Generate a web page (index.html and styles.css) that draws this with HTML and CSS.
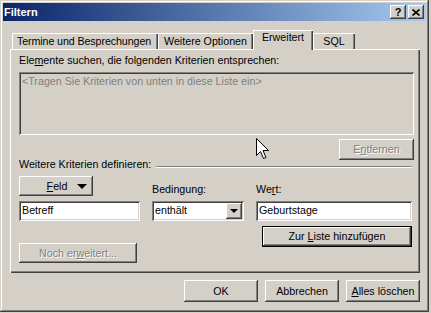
FILE: index.html
```html
<!DOCTYPE html>
<html lang="de">
<head>
    <meta charset="UTF-8">
    <title>Filtern</title>
    <link rel="stylesheet" href="styles.css">
</head>
<body>
<div class="window">
    <div class="titlebar">
        <span class="title">Filtern</span>
        <div class="caption-buttons">
            <span class="cap-btn help">?</span>
            <span class="cap-btn">
                <svg width="8" height="7" viewBox="0 0 8 7"><path d="M0.5 0.5L7.5 6.5M7.5 0.5L0.5 6.5" stroke="#000" stroke-width="1.7"/></svg>
            </span>
        </div>
    </div>

    <div class="client">
        <!-- Tab strip -->
        <div class="tabs">
            <div class="tab tab-termine">Termine und Besprechungen</div>
            <div class="tab tab-weitere">Weitere Optionen</div>
            <div class="tab tab-erweitert active">Erweitert</div>
            <div class="tab tab-sql">SQL</div>
        </div>

        <div class="panel">
            <div class="label">Ele<u>m</u>ente suchen, die folgenden Kriterien entsprechen:</div>
            <div class="listbox">&lt;Tragen Sie Kriterien von unten in diese Liste ein&gt;</div>
            <div class="remove-row">
                <button class="btn disabled btn-remove"><span>E<u>n</u>tfernen</span></button>
            </div>

            <div class="group-title">
                <span>Weitere Kriterien definieren:</span>
                <span class="rule"></span>
            </div>

            <div class="criteria">
                <div class="col col-field">
                    <button class="btn btn-feld"><span class="feld-text"><u>F</u>eld</span><span class="tri"></span></button>
                    <div class="field">Betreff</div>
                </div>
                <div class="col col-cond">
                    <label class="small-label">Bedingung:</label>
                    <div class="field combo">
                        <span>enthält</span>
                        <span class="drop"><span class="tri small"></span></span>
                    </div>
                </div>
                <div class="col col-value">
                    <label class="small-label">We<u>r</u>t:</label>
                    <div class="field">Geburtstage</div>
                </div>
            </div>

            <div class="actions">
                <button class="btn disabled btn-more"><span>Noch er<u>w</u>eitert...</span></button>
                <button class="btn default btn-add"><span>Zur <u>L</u>iste hinzufügen</span></button>
            </div>
        </div>

        <div class="footer">
            <button class="btn btn-footer"><span>OK</span></button>
            <button class="btn btn-footer"><span>Abbrechen</span></button>
            <button class="btn btn-footer"><span><u>A</u>lles löschen</span></button>
        </div>
    </div>

    <!-- mouse pointer over the dialog -->
    <svg class="cursor" width="13" height="21" viewBox="0 0 13 21">
        <path d="M0.5 0.5V17.5L4.5 13.5L7.5 20.5L10 19.5L7 12.5H12.5Z" fill="#fff" stroke="#000" stroke-width="1"/>
    </svg>
</div>
</body>
</html>
```

FILE: styles.css
```css
/* Classic Windows dialog look */
* {
    box-sizing: border-box;
}

body {
    margin: 0;
    background: #d4d0c8;
    font-family: "Liberation Sans", Arial, sans-serif;
    font-size: 10.7px;
    line-height: 13px;
    color: #000;
}

u {
    text-decoration: underline;
    text-underline-offset: 1px;
}

.window {
    position: relative;
    width: 429px;
    height: 312px;
    padding: 3px;
    background: #d4d0c8;
    box-shadow: inset -1px -1px #404040, inset 1px 1px #d4d0c8, inset -2px -2px #808080, inset 2px 2px #fff;
}

.titlebar {
    height: 18px;
    display: flex;
    align-items: center;
    justify-content: space-between;
    padding: 0 2px 0 1px;
    background: linear-gradient(to right, #0a246a, #a6caf0);
    color: #fff;
    font-weight: bold;
    font-size: 11px;
}

.caption-buttons {
    display: flex;
    gap: 2px;
}

.cap-btn {
    width: 16px;
    height: 14px;
    display: flex;
    align-items: center;
    justify-content: center;
    background: #d4d0c8;
    color: #000;
    box-shadow: inset -1px -1px #404040, inset 1px 1px #fff, inset -2px -2px #808080;
}

.cap-btn.help {
    font-size: 11px;
    font-weight: bold;
    padding-top: 1px;
}

.client {
    padding: 9px 6px 0 7px;
}

/* Tabs */
.tabs {
    display: flex;
    align-items: flex-end;
    height: 19px;
    padding-left: 2px;
}

.tab {
    height: 16px;
    padding-top: 2px;
    text-align: center;
    white-space: nowrap;
    box-shadow: inset 1px 1px #fff, inset -1px 0 #404040, inset -2px 0 #808080;
}

.tab-termine { width: 146px; padding-right: 2px; letter-spacing: -0.1px; }
.tab-weitere { width: 95px; }
.tab-erweitert { width: 60px; }
.tab-sql { width: 42px; }

.tab.active {
    position: relative;
    z-index: 1;
    height: 20px;
    margin-bottom: -1px;
    padding-top: 1px;
    background: #d4d0c8;
}

.panel {
    height: 224px;
    padding: 5px 6px 0 9px;
    box-shadow: inset 1px 1px #fff, inset -1px -1px #404040, inset -2px -2px #808080;
}

.listbox {
    width: 395px;
    height: 63px;
    margin-top: 5px;
    padding: 3px 3px;
    color: #808080;
    box-shadow: inset 1px 1px #808080, inset -1px -1px #fff, inset 2px 2px #404040, inset -2px -2px #d4d0c8;
}

.remove-row {
    display: flex;
    justify-content: flex-end;
    margin-top: 4px;
}

/* Buttons */
.btn {
    display: flex;
    align-items: center;
    justify-content: center;
    padding: 0;
    border: 0;
    background: #d4d0c8;
    font: inherit;
    color: #000;
    white-space: nowrap;
    box-shadow: inset -1px -1px #404040, inset 1px 1px #fff, inset -2px -2px #808080, inset 2px 2px #d4d0c8;
}

.btn.disabled {
    color: #808080;
    text-shadow: 1px 1px #fff;
}

.btn.default {
    border: 1px solid #000;
}

.btn-remove {
    width: 75px;
    height: 21px;
}

.group-title {
    display: flex;
    align-items: flex-start;
    margin-top: -2px;
    height: 13px;
}

.rule {
    flex: 1;
    margin: 8px 2px 0 5px;
    border-top: 1px solid #808080;
    border-bottom: 1px solid #fff;
}

/* Criteria row */
.criteria {
    display: flex;
    align-items: flex-end;
    margin-top: 5px;
}

.col {
    display: flex;
    flex-direction: column;
    align-items: flex-start;
}

.col-field { width: 121px; }
.col-cond { width: 92px; margin-left: 12px; }
.col-value { width: 156px; margin-left: 12px; }

.btn-feld {
    width: 74px;
    height: 20px;
    margin-bottom: 5px;
    justify-content: flex-start;
    padding-left: 18px;
}

.feld-text {
    width: 40px;
}

.tri {
    width: 0;
    height: 0;
    border-left: 5px solid transparent;
    border-right: 5px solid transparent;
    border-top: 5px solid #000;
}

.tri.small {
    border-left-width: 4px;
    border-right-width: 4px;
    border-top-width: 4px;
}

.small-label {
    margin-bottom: 5px;
}

.field {
    width: 100%;
    height: 20px;
    padding: 3px 3px 0;
    background: #fff;
    box-shadow: inset 1px 1px #808080, inset -1px -1px #fff, inset 2px 2px #404040, inset -2px -2px #d4d0c8;
}

.combo {
    display: flex;
    justify-content: space-between;
    padding-right: 2px;
}

.drop {
    width: 16px;
    height: 16px;
    margin-top: -1px;
    display: flex;
    align-items: center;
    justify-content: center;
    background: #d4d0c8;
    box-shadow: inset -1px -1px #404040, inset 1px 1px #fff, inset -2px -2px #808080;
}

.actions {
    display: flex;
    justify-content: space-between;
    align-items: flex-start;
    margin-top: 5px;
}

.btn-more {
    width: 118px;
    height: 20px;
    margin-top: 17px;
}

.btn-add {
    width: 150px;
    height: 21px;
    margin-right: 2px;
}

.footer {
    display: flex;
    justify-content: flex-end;
    gap: 7px;
    margin-top: 7px;
}

.btn-footer {
    width: 74px;
    height: 22px;
}

.cursor {
    position: absolute;
    left: 256px;
    top: 138px;
}
```
